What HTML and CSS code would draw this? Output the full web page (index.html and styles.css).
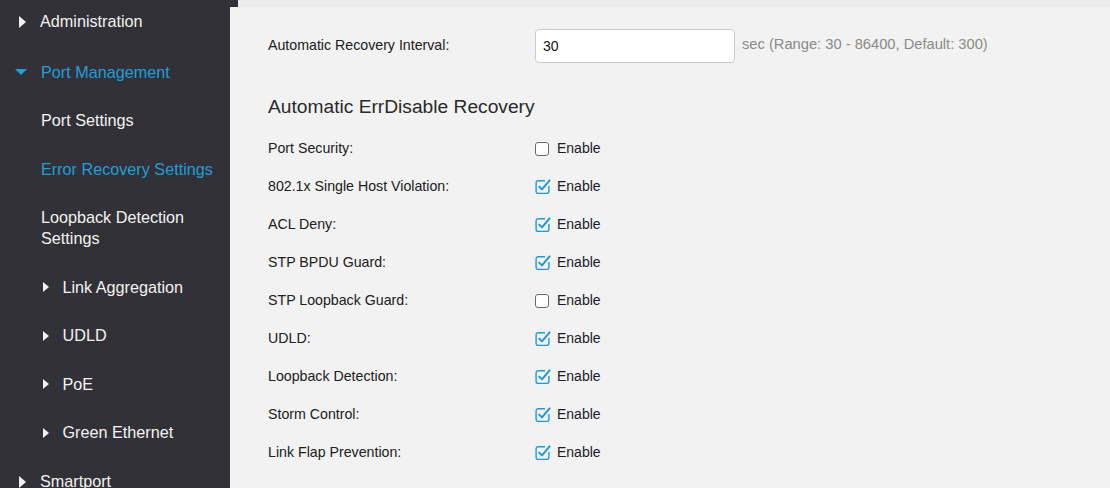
FILE: index.html
```html
<!DOCTYPE html>
<html>
<head>
<meta charset="utf-8">
<link rel="stylesheet" href="styles.css">
</head>
<body>
<div class="app">
  <nav class="sidebar">
    <div class="top-item">
      <span class="tri-right"></span><span class="label">Administration</span>
    </div>
    <div class="divider"></div>
    <div class="group">
      <div class="nav-item head active"><span class="tri-down"></span><span>Port Management</span></div>
      <div class="nav-item sub">Port Settings</div>
      <div class="nav-item sub active">Error Recovery Settings</div>
      <div class="nav-item sub">Loopback Detection<br>Settings</div>
      <div class="nav-item sub2"><span class="tri-small"></span><span>Link Aggregation</span></div>
      <div class="nav-item sub2"><span class="tri-small"></span><span>UDLD</span></div>
      <div class="nav-item sub2"><span class="tri-small"></span><span>PoE</span></div>
      <div class="nav-item sub2"><span class="tri-small"></span><span>Green Ethernet</span></div>
    </div>
    <div class="divider divider-wide"></div>
    <div class="bottom-item">
      <span class="tri-right"></span><span class="label">Smartport</span>
    </div>
  </nav>
  <main class="main">
    <section class="panel">
      <div class="interval-row">
        <span class="field-label up">Automatic Recovery Interval:</span>
        <div class="input-box">30</div>
        <span class="hint">sec (Range: 30 - 86400, Default: 300)</span>
      </div>
      <h2 class="section-title">Automatic ErrDisable Recovery</h2>
      <div class="rows">
        <div class="row"><span class="field-label">Port Security:</span><span class="cb"></span><span class="enable">Enable</span></div>
        <div class="row"><span class="field-label">802.1x Single Host Violation:</span><svg class="cbx" viewBox="0 0 16 16"><path d="M10 2.7H3.3a2.2 2.2 0 0 0-2.2 2.2v8.4a2.2 2.2 0 0 0 2.2 2.2h8.4a2.2 2.2 0 0 0 2.2-2.2V8"/><path class="ck" d="M4.2 8.6L7 11.4L14.6 2.4"/></svg><span class="enable">Enable</span></div>
        <div class="row"><span class="field-label">ACL Deny:</span><svg class="cbx" viewBox="0 0 16 16"><path d="M10 2.7H3.3a2.2 2.2 0 0 0-2.2 2.2v8.4a2.2 2.2 0 0 0 2.2 2.2h8.4a2.2 2.2 0 0 0 2.2-2.2V8"/><path class="ck" d="M4.2 8.6L7 11.4L14.6 2.4"/></svg><span class="enable">Enable</span></div>
        <div class="row"><span class="field-label">STP BPDU Guard:</span><svg class="cbx" viewBox="0 0 16 16"><path d="M10 2.7H3.3a2.2 2.2 0 0 0-2.2 2.2v8.4a2.2 2.2 0 0 0 2.2 2.2h8.4a2.2 2.2 0 0 0 2.2-2.2V8"/><path class="ck" d="M4.2 8.6L7 11.4L14.6 2.4"/></svg><span class="enable">Enable</span></div>
        <div class="row"><span class="field-label">STP Loopback Guard:</span><span class="cb"></span><span class="enable">Enable</span></div>
        <div class="row"><span class="field-label">UDLD:</span><svg class="cbx" viewBox="0 0 16 16"><path d="M10 2.7H3.3a2.2 2.2 0 0 0-2.2 2.2v8.4a2.2 2.2 0 0 0 2.2 2.2h8.4a2.2 2.2 0 0 0 2.2-2.2V8"/><path class="ck" d="M4.2 8.6L7 11.4L14.6 2.4"/></svg><span class="enable">Enable</span></div>
        <div class="row"><span class="field-label">Loopback Detection:</span><svg class="cbx" viewBox="0 0 16 16"><path d="M10 2.7H3.3a2.2 2.2 0 0 0-2.2 2.2v8.4a2.2 2.2 0 0 0 2.2 2.2h8.4a2.2 2.2 0 0 0 2.2-2.2V8"/><path class="ck" d="M4.2 8.6L7 11.4L14.6 2.4"/></svg><span class="enable">Enable</span></div>
        <div class="row"><span class="field-label">Storm Control:</span><svg class="cbx" viewBox="0 0 16 16"><path d="M10 2.7H3.3a2.2 2.2 0 0 0-2.2 2.2v8.4a2.2 2.2 0 0 0 2.2 2.2h8.4a2.2 2.2 0 0 0 2.2-2.2V8"/><path class="ck" d="M4.2 8.6L7 11.4L14.6 2.4"/></svg><span class="enable">Enable</span></div>
        <div class="row"><span class="field-label">Link Flap Prevention:</span><svg class="cbx" viewBox="0 0 16 16"><path d="M10 2.7H3.3a2.2 2.2 0 0 0-2.2 2.2v8.4a2.2 2.2 0 0 0 2.2 2.2h8.4a2.2 2.2 0 0 0 2.2-2.2V8"/><path class="ck" d="M4.2 8.6L7 11.4L14.6 2.4"/></svg><span class="enable">Enable</span></div>
      </div>
    </section>
  </main>
</div>
</body>
</html>
```

FILE: styles.css
```css
html, body {
  margin: 0;
  padding: 0;
  height: 488px;
  overflow: hidden;
}
body {
  font-family: "Liberation Sans", Arial, sans-serif;
}
.app {
  display: flex;
  height: 488px;
}
.sidebar {
  width: 230px;
  flex: 0 0 230px;
  background: #323137;
  color: #f2f2f2;
  font-size: 16.2px;
  line-height: 21px;
  display: flex;
  flex-direction: column;
}
.top-item {
  display: flex;
  align-items: center;
  padding: 11px 0 14px 19px;
}
.bottom-item {
  display: flex;
  align-items: center;
  padding: 14px 0 0 19px;
}
.tri-right {
  width: 0;
  height: 0;
  border-top: 6px solid transparent;
  border-bottom: 6px solid transparent;
  border-left: 7px solid #f2f2f2;
  margin-right: 14px;
}
.divider {
  height: 1px;
  background: #5b5a60;
  margin-left: 10px;
}
.divider-wide {
  margin-left: 7px;
}
.group {
  display: flex;
  flex-direction: column;
  gap: 27.5px;
  padding: 15.5px 0 14px 0;
}
.nav-item {
  display: flex;
  align-items: center;
}
.nav-item.head {
  padding-left: 15px;
}
.tri-down {
  width: 0;
  height: 0;
  border-left: 6px solid transparent;
  border-right: 6px solid transparent;
  border-top: 6px solid #1d9fd9;
  margin-right: 14px;
}
.nav-item.sub {
  display: block;
  padding-left: 41px;
}
.nav-item.sub2 {
  padding-left: 43px;
}
.tri-small {
  width: 0;
  height: 0;
  border-top: 5px solid transparent;
  border-bottom: 5px solid transparent;
  border-left: 6.5px solid #f2f2f2;
  margin-right: 13.5px;
}
.active {
  color: #1d9fd9;
}
.main {
  flex: 1;
  display: flex;
  flex-direction: column;
  background: linear-gradient(to right, #323137 8px, #ebebeb 8px);
}
.panel {
  flex: 1;
  margin-top: 7px;
  background: #f2f2f2;
  padding: 22px 38px 0 38px;
  color: #222;
  font-size: 14px;
}
.interval-row {
  display: flex;
  align-items: center;
  height: 34px;
}
.field-label {
  width: 267px;
  flex: 0 0 267px;
  color: #202020;
  font-size: 14.2px;
}
.field-label.up {
  margin-top: -3px;
}
.input-box {
  width: 184px;
  height: 32px;
  border: 1px solid #cbcbcb;
  border-radius: 4px;
  background: #fff;
  padding: 0 7px;
  display: flex;
  align-items: center;
  color: #111;
  font-size: 14px;
}
.hint {
  margin-left: 7px;
  color: #8a8a8a;
  margin-top: -4px;
  font-size: 14.7px;
}
.section-title {
  margin: 32px 0 10px 0;
  font-size: 19.2px;
  font-weight: normal;
  line-height: 24px;
  color: #2a2a2a;
}
.rows {
  display: flex;
  flex-direction: column;
}
.row {
  height: 38px;
  display: flex;
  align-items: center;
}
.cb {
  width: 12px;
  height: 12px;
  border: 1.3px solid #6a6a6a;
  border-radius: 3px;
  background: #fff;
  margin-right: 8px;
  margin-top: 1px;
}
.cbx {
  width: 16px;
  height: 16px;
  margin-right: 6px;
  margin-top: -1px;
  fill: none;
  stroke: #1e9ad9;
  stroke-width: 1.4;
}
.cbx .ck {
  stroke-width: 2;
  stroke-linecap: round;
  stroke-linejoin: round;
}
.enable {
  color: #1b1b2a;
}
```
